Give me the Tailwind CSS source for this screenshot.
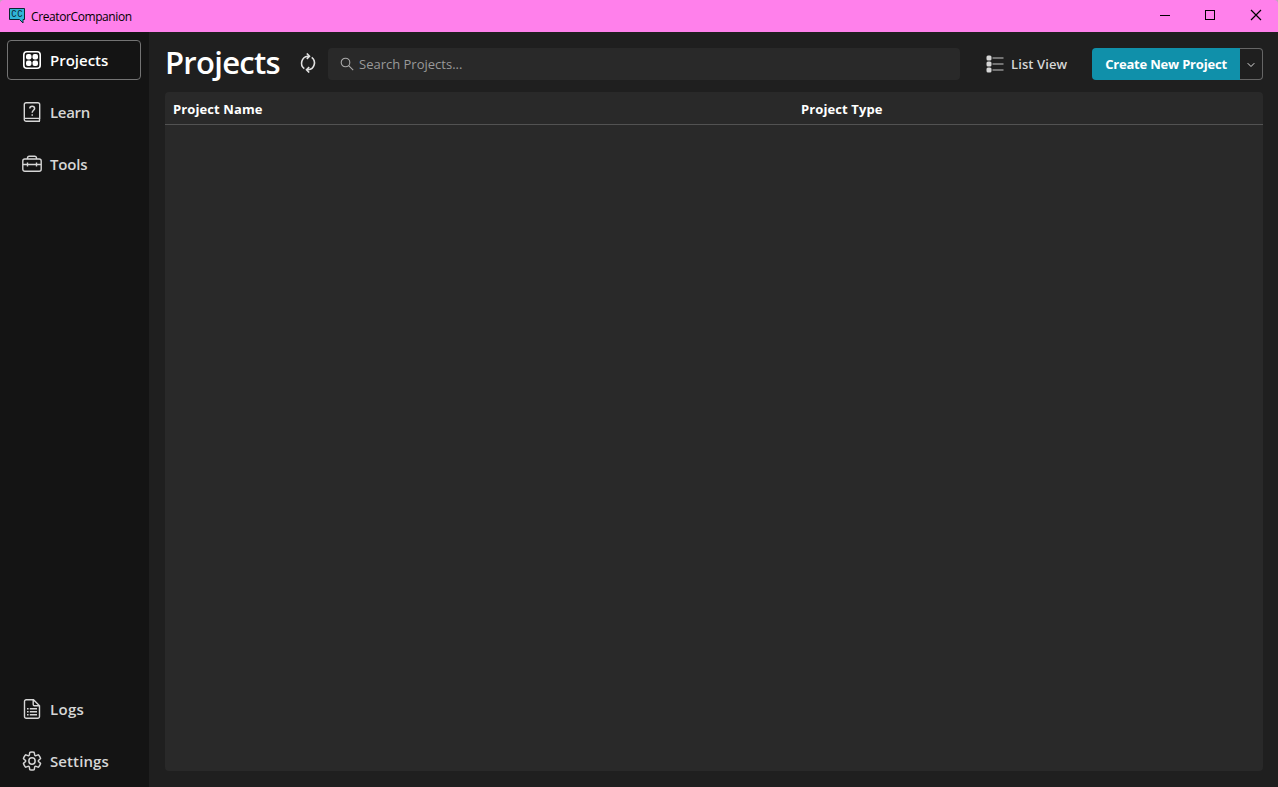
<!DOCTYPE html>
<html lang="en">
<head>
<meta charset="utf-8">
<title>CreatorCompanion</title>
<script src="https://cdn.jsdelivr.net/npm/@tailwindcss/browser@4"></script>
</head>
<body class="w-[1278px] h-[787px] overflow-hidden flex flex-col bg-[#1f1f1f] font-['Open_Sans','Noto_Sans',sans-serif] text-white">
<div class="shrink-0 bg-[#c4a2be]">
<header class="h-8 rounded-t-[4px] bg-[#ff80eb] flex items-center text-black">
  <svg class="ml-2 shrink-0" width="18" height="18" viewBox="0 0 18 18"><path d="M1.500 1.500h15v11h-1.500v3.500l-3.500-3.500h-10z" fill="#30b5d8" stroke="#0b2730"/><text transform="translate(3.200 10.300) scale(1 1.200)" font-family="Liberation Mono" font-size="9" textLength="11.500" fill="#0b2730">CC</text></svg>
  <span class="ml-[5px] mt-px text-[12px] tracking-[-0.4px]">CreatorCompanion</span>
  <div class="ml-auto flex">
    <svg width="46" height="32"><path d="M20 15.500h10" stroke="#000"/></svg>
    <svg width="46" height="32"><rect x="19.500" y="10.500" width="9" height="9" fill="none" stroke="#000"/></svg>
    <svg width="46" height="32"><path d="M19 10l10 10M29 10l-10 10" stroke="#000" stroke-width="1.200"/></svg>
  </div>
</header>
</div>
<div class="flex flex-1 min-h-0">
  <nav class="w-[149px] shrink-0 bg-[#141414] pt-2 pb-[6px] pl-[7px] pr-2 flex flex-col gap-3 text-[15px] font-semibold text-[#d6d6d6]">
    <a class="h-10 flex items-center gap-2 pl-[14px] rounded-[4px] border border-[#737373] text-white">
      <svg width="20" height="20" viewBox="0 0 20 20"><rect x="1.800" y="1.800" width="16.400" height="16.400" rx="3" fill="none" stroke="#fff" stroke-width="1.600"/><g fill="#fff"><rect x="4" y="4" width="5.500" height="5.500" rx="2"/><rect x="10.500" y="4" width="5.500" height="5.500" rx="2"/><rect x="4" y="10.500" width="5.500" height="5.500" rx="2"/><rect x="10.500" y="10.500" width="5.500" height="5.500" rx="2"/></g></svg>
      <span>Projects</span></a>
    <a class="h-10 flex items-center gap-2 pl-[15px]">
      <svg width="20" height="20" viewBox="0 0 20 20" fill="none" stroke="#d6d6d6" stroke-width="1.400"><path d="M18 19.300H4.200a1.900 1.900 0 0 1-1.900-1.900V2.600A1.900 1.900 0 0 1 4.200.7h11.600a1.900 1.900 0 0 1 1.900 1.900v13.800H3M17.500 16.500v2.500"/><path d="M7.800 6.500c0-3 4.800-3 4.800 0 0 1.800-2.400 1.900-2.400 4.200" stroke-width="1.500"/><circle cx="10.200" cy="13" r=".5" fill="#d6d6d6" stroke-width=".8"/></svg>
      <span class="tracking-[-0.3px]">Learn</span></a>
    <a class="h-10 flex items-center gap-2 pl-[15px]">
      <svg width="20" height="20" viewBox="0 0 20 20" fill="none" stroke="#d6d6d6" stroke-width="1.400"><rect x=".8" y="5" width="18.400" height="12.300" rx="2"/><path d="M5.500 5V4a1.800 1.800 0 0 1 1.800-1.800h5.400A1.800 1.800 0 0 1 14.500 4v1M1 10.500h18M5.500 8.500v4M14.500 8.500v4"/></svg>
      <span class="tracking-[-0.2px]">Tools</span></a>
    <a class="mt-auto h-10 flex items-center gap-2 pl-[15px]">
      <svg width="20" height="20" viewBox="0 0 20 20" fill="none" stroke="#d6d6d6" stroke-width="1.400"><path d="M11.500.7H4.200A1.700 1.700 0 0 0 2.500 2.400v15.200a1.700 1.700 0 0 0 1.700 1.700h11.600a1.700 1.700 0 0 0 1.700-1.700V6.700zM11.200.8v4.700A1.300 1.300 0 0 0 12.500 6.800h4.800"/><path d="M5 9.700h1.600M7.800 9.700h7.200M5 12.700h1.600M7.800 12.700h7.200M5 15.700h1.600M7.800 15.700h7.200"/></svg>
      <span class="tracking-[0.3px]">Logs</span></a>
    <a class="h-10 flex items-center gap-2 pl-[15px]">
      <svg width="20" height="20" viewBox="0 0 20 20" fill="none" stroke="#d6d6d6" stroke-width="1.400"><g transform="translate(-.5 -.5) scale(1.050)"><path d="M1.910 7.380A8.500 8.500 0 0 1 3.700 4.300a.5.5 0 0 1 .54-.13l1.920.68a1 1 0 0 0 1.320-.76l.36-2a.5.5 0 0 1 .4-.4 8.530 8.530 0 0 1 3.550 0c.2.04.35.2.38.4l.37 2a1 1 0 0 0 1.320.76l1.920-.68a.5.5 0 0 1 .54.13 8.500 8.500 0 0 1 1.780 3.080c.06.2 0 .4-.15.54l-1.560 1.320a1 1 0 0 0 0 1.520l1.560 1.320a.5.5 0 0 1 .15.54 8.500 8.500 0 0 1-1.780 3.080.5.5 0 0 1-.54.13l-1.920-.68a1 1 0 0 0-1.320.76l-.37 2a.5.5 0 0 1-.38.4 8.530 8.530 0 0 1-3.560 0 .5.5 0 0 1-.39-.4l-.36-2a1 1 0 0 0-1.320-.76l-1.920.68a.5.5 0 0 1-.54-.13 8.500 8.500 0 0 1-1.780-3.080.5.5 0 0 1 .15-.54l1.560-1.320a1 1 0 0 0 0-1.520L2.060 7.920a.5.5 0 0 1-.15-.54Z"/><circle cx="10" cy="10" r="3"/></g></svg>
      <span class="tracking-[0.1px]">Settings</span></a>
  </nav>
  <main class="flex-1 min-w-0 pl-4 pr-[15px] pt-4 pb-4 flex flex-col">
    <div class="h-8 flex items-center shrink-0">
      <h1 class="w-[133px] text-[31px] leading-8 font-semibold tracking-[-0.7px] -mt-[5px]">Projects</h1>
      <svg class="shrink-0 -mt-[2px]" width="20" height="20" viewBox="0 0 20 20" fill="none" stroke="#e0e0e0" stroke-width="1.600"><path d="M6.300 15.700A7 7 0 0 1 9.800 3.200H11M13.700 4.300A7 7 0 0 1 10.200 16.800H9"/><path d="M8.800.5L11.500 3.200 8.800 5.900M11.200 14.100L8.500 16.800l2.700 2.700"/></svg>
      <div class="ml-[10px] w-[632px] h-8 rounded-[4px] bg-[#292929] flex items-center pl-3 text-[13px] text-[#999]">
        <svg width="14" height="14" viewBox="0 0 14 14" fill="none" stroke="#aaa" stroke-width="1.100"><circle cx="5.500" cy="5.500" r="4.300"/><path d="M8.700 8.700l4.500 4.500"/></svg>
        <span class="ml-[5px] mt-[2px]">Search Projects...</span>
      </div>
      <div class="ml-[26px] flex items-center text-[13px] font-semibold text-[#d6d6d6]">
        <svg width="18" height="18" viewBox="0 0 18 18"><g fill="#d6d6d6"><rect x=".5" y=".5" width="5" height="5" rx="1.500"/><rect x=".5" y="6.500" width="5" height="5" rx="1.500"/><rect x=".5" y="12.500" width="5" height="5" rx="1.500"/></g><path d="M6.500 3h11M6.500 9h11M6.500 15h11" stroke="#c8c8c8" stroke-width="1.200"/></svg>
        <span class="ml-[7px] mt-[2px] tracking-[0.1px]">List View</span>
      </div>
      <div class="ml-auto flex h-8">
        <button class="w-[148px] h-8 pt-[2px] rounded-l-[4px] bg-[#1090aa] text-[13px] font-bold tracking-[-0.2px] whitespace-nowrap">Create New Project</button>
        <button class="w-[23px] h-8 rounded-r-[4px] border border-l-0 border-[#666] flex items-center justify-center"><svg width="8" height="6" viewBox="0 0 8 6" class="mt-[2px]"><path d="M.7 1.200L4 4.500 7.300 1.200" fill="none" stroke="#ddd"/></svg></button>
      </div>
    </div>
    <section class="mt-3 flex-1 rounded-[4px] bg-[#292929]">
      <div class="h-[33px] pt-[3px] border-b border-[#525252] flex items-center pl-2 text-[13px] font-bold tracking-[0.1px]">
        <span class="w-[628px]">Project Name</span><span>Project Type</span>
      </div>
    </section>
  </main>
</div>
</body>
</html>
